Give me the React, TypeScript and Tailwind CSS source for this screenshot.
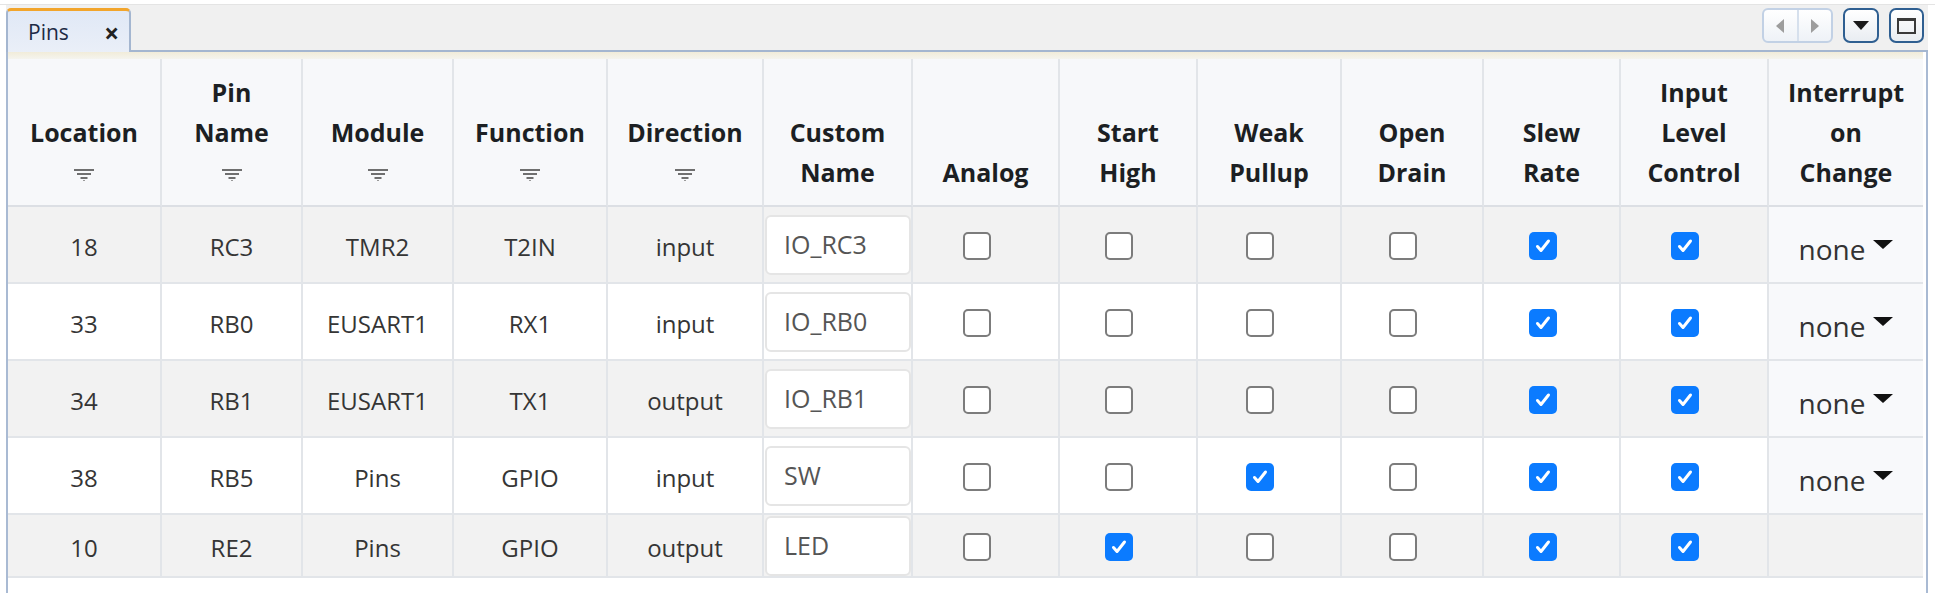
import React from 'react';

type Row = {
    loc: string;
    pin: string;
    module: string;
    fn: string;
    dir: string;
    custom: string;
    flags: boolean[];
    ioc: string | null;
};

const rows: Row[] = [
    { loc: '18', pin: 'RC3', module: 'TMR2', fn: 'T2IN', dir: 'input', custom: 'IO_RC3', flags: [false, false, false, false, true, true], ioc: 'none' },
    { loc: '33', pin: 'RB0', module: 'EUSART1', fn: 'RX1', dir: 'input', custom: 'IO_RB0', flags: [false, false, false, false, true, true], ioc: 'none' },
    { loc: '34', pin: 'RB1', module: 'EUSART1', fn: 'TX1', dir: 'output', custom: 'IO_RB1', flags: [false, false, false, false, true, true], ioc: 'none' },
    { loc: '38', pin: 'RB5', module: 'Pins', fn: 'GPIO', dir: 'input', custom: 'SW', flags: [false, false, true, false, true, true], ioc: 'none' },
    { loc: '10', pin: 'RE2', module: 'Pins', fn: 'GPIO', dir: 'output', custom: 'LED', flags: [false, true, false, false, true, true], ioc: null },
];

const headers: { lines: string[]; filter?: boolean }[] = [
    { lines: ['Location'], filter: true },
    { lines: ['Pin', 'Name'], filter: true },
    { lines: ['Module'], filter: true },
    { lines: ['Function'], filter: true },
    { lines: ['Direction'], filter: true },
    { lines: ['Custom', 'Name'] },
    { lines: ['Analog'] },
    { lines: ['Start', 'High'] },
    { lines: ['Weak', 'Pullup'] },
    { lines: ['Open', 'Drain'] },
    { lines: ['Slew', 'Rate'] },
    { lines: ['Input', 'Level', 'Control'] },
    { lines: ['Interrupt', 'on', 'Change'] },
];

const FilterIcon = () => (
    <svg width="20" height="12" viewBox="0 0 20 12" fill="none">
        <path d="M0 1h20M3 5h14M6.5 9h7" stroke="#6f6f6f" strokeWidth="2" />
        <path d="M9 11.5h2" stroke="#9a9a9a" strokeWidth="1" />
    </svg>
);

const Checkbox = ({ checked }: { checked: boolean }) =>
    checked ? (
        <div className="w-[28px] h-[28px] rounded-[5px] bg-[#0b7bff] flex items-center justify-center">
            <svg width="20" height="20" viewBox="0 0 20 20" fill="none">
                <path d="M4.5 10.5l3.5 4L15.5 5" stroke="white" strokeWidth="3" strokeLinecap="round" strokeLinejoin="round" />
            </svg>
        </div>
    ) : (
        <div className="w-[28px] h-[28px] rounded-[5px] border-2 border-[#7c7c7c] bg-white" />
    );

const cellBase = 'border-r-2 border-b-2 border-[#e2e5e9] flex items-center';

export default function App() {
    return (
        <div className="w-[1935px] h-[593px] bg-white overflow-hidden font-['Open_Sans',sans-serif]">
            <div className="h-[5px] bg-white border-b border-[#e4e4e4]" />
            <div className="ml-[6px] mr-[7px]">
                {/* tab strip */}
                <div className="h-[47px] bg-[#f0f0f0] border-b-2 border-[#a4b6d0] flex justify-between">
                    <div className="self-end -mb-[2px] w-[125px] h-[44px] rounded-t-[5px] border-t-[3px] border-[#f2a52c] bg-gradient-to-b from-[#e0e8f6] to-[#eaeff8] border-x-2 border-x-[#a4b6d0] flex items-center justify-between pl-[20px] pr-[10px]">
                        <span className="text-[21px] text-[#1d2a45] leading-none pt-[1px]">Pins</span>
                        <span className="text-[26px] font-bold text-[#222] leading-none pt-[2px]">×</span>
                    </div>
                    <div className="flex items-start pt-[3px] pr-[4px] gap-[10px]">
                        <div className="w-[71px] h-[35px] rounded-[6px] border-2 border-[#c2d1e5] bg-gradient-to-b from-white to-[#eef2f7] flex">
                            <div className="flex-1 flex items-center justify-center border-r-2 border-[#d6e0ed]">
                                <svg width="9" height="14" viewBox="0 0 9 14"><path d="M8 0v14L0 7z" fill="#9d9d9d" /></svg>
                            </div>
                            <div className="flex-1 flex items-center justify-center">
                                <svg width="9" height="14" viewBox="0 0 9 14"><path d="M1 0v14l8-7z" fill="#9d9d9d" /></svg>
                            </div>
                        </div>
                        <div className="w-[36px] h-[35px] rounded-[7px] border-2 border-[#2f5f91] bg-gradient-to-b from-white to-[#e9edf2] flex items-center justify-center">
                            <svg width="16" height="9" viewBox="0 0 16 9"><path d="M0 0h16L8 9z" fill="#1b1b1b" /></svg>
                        </div>
                        <div className="w-[35px] h-[35px] rounded-[7px] border-2 border-[#2f5f91] bg-gradient-to-b from-white to-[#e9edf2] flex items-center justify-center">
                            <div className="w-[19px] h-[16px] border-2 border-t-[3px] border-[#3a3a3a]" />
                        </div>
                    </div>
                </div>

                {/* panel body */}
                <div className="border-x-2 border-[#a9bad3] bg-white pr-[3px]">
                    <div className="h-[7px] bg-gradient-to-b from-[#f1ecd9] to-[#f5f4ee]" />
                    <div className="grid grid-cols-[154px_141px_151px_154px_156px_149px_147px_138px_144px_142px_137px_148px_154px]">
                        {headers.map((h, i) => (
                            <div
                                key={i}
                                className={`h-[148px] bg-[#f7f8fa] border-b-2 border-[#dcdfe4] ${i < 12 ? 'border-r-2 border-r-[#e2e5e9]' : ''} flex flex-col items-center justify-end pb-[13px] text-[25px] leading-[40px] font-bold text-[#1c1f23] text-center`}
                            >
                                {h.lines.map((l) => (
                                    <div key={l}>{l}</div>
                                ))}
                                {h.filter && (
                                    <div className="h-[40px] flex items-center justify-center pt-[6px]">
                                        <FilterIcon />
                                    </div>
                                )}
                            </div>
                        ))}

                        {rows.map((r, ri) => {
                            const bg = ri % 2 === 0 ? 'bg-[#f2f2f2]' : 'bg-white';
                            const h = ri === rows.length - 1 ? 'h-[63px]' : 'h-[77px]';
                            const text = `${cellBase} ${bg} ${h} justify-center pt-[4px] text-[24px] text-[#353535]`;
                            return (
                                <React.Fragment key={ri}>
                                    <div className={text}>{r.loc}</div>
                                    <div className={text}>{r.pin}</div>
                                    <div className={text}>{r.module}</div>
                                    <div className={text}>{r.fn}</div>
                                    <div className={text}>{r.dir}</div>
                                    <div className={`${cellBase} ${bg} ${h} pl-[1px] pt-[1px]`}>
                                        <div className="w-[146px] h-[60px] rounded-[6px] border-2 border-[#e5e5e5] bg-white flex items-center pl-[17px] text-[25px] text-[#555]">
                                            {r.custom}
                                        </div>
                                    </div>
                                    {r.flags.map((f, fi) => (
                                        <div key={fi} className={`${cellBase} ${bg} ${h} justify-center pr-[18px] pt-[3px]`}>
                                            <Checkbox checked={f} />
                                        </div>
                                    ))}
                                    {r.ioc ? (
                                        <div className={`border-b-2 border-[#e2e5e9] bg-[#f8f9fb] ${h} flex items-center justify-center pt-[8px]`}>
                                            <span className="text-[28px] text-[#333] leading-none">{r.ioc}</span>
                                            <svg className="ml-[8px] -mt-[8px]" width="20" height="9" viewBox="0 0 20 9"><path d="M0 0h20L10 9z" fill="#111" /></svg>
                                        </div>
                                    ) : (
                                        <div className={`border-b-2 border-[#e2e5e9] ${bg} ${h}`} />
                                    )}
                                </React.Fragment>
                            );
                        })}
                    </div>
                    <div className="h-[40px]" />
                </div>
            </div>
        </div>
    );
}
